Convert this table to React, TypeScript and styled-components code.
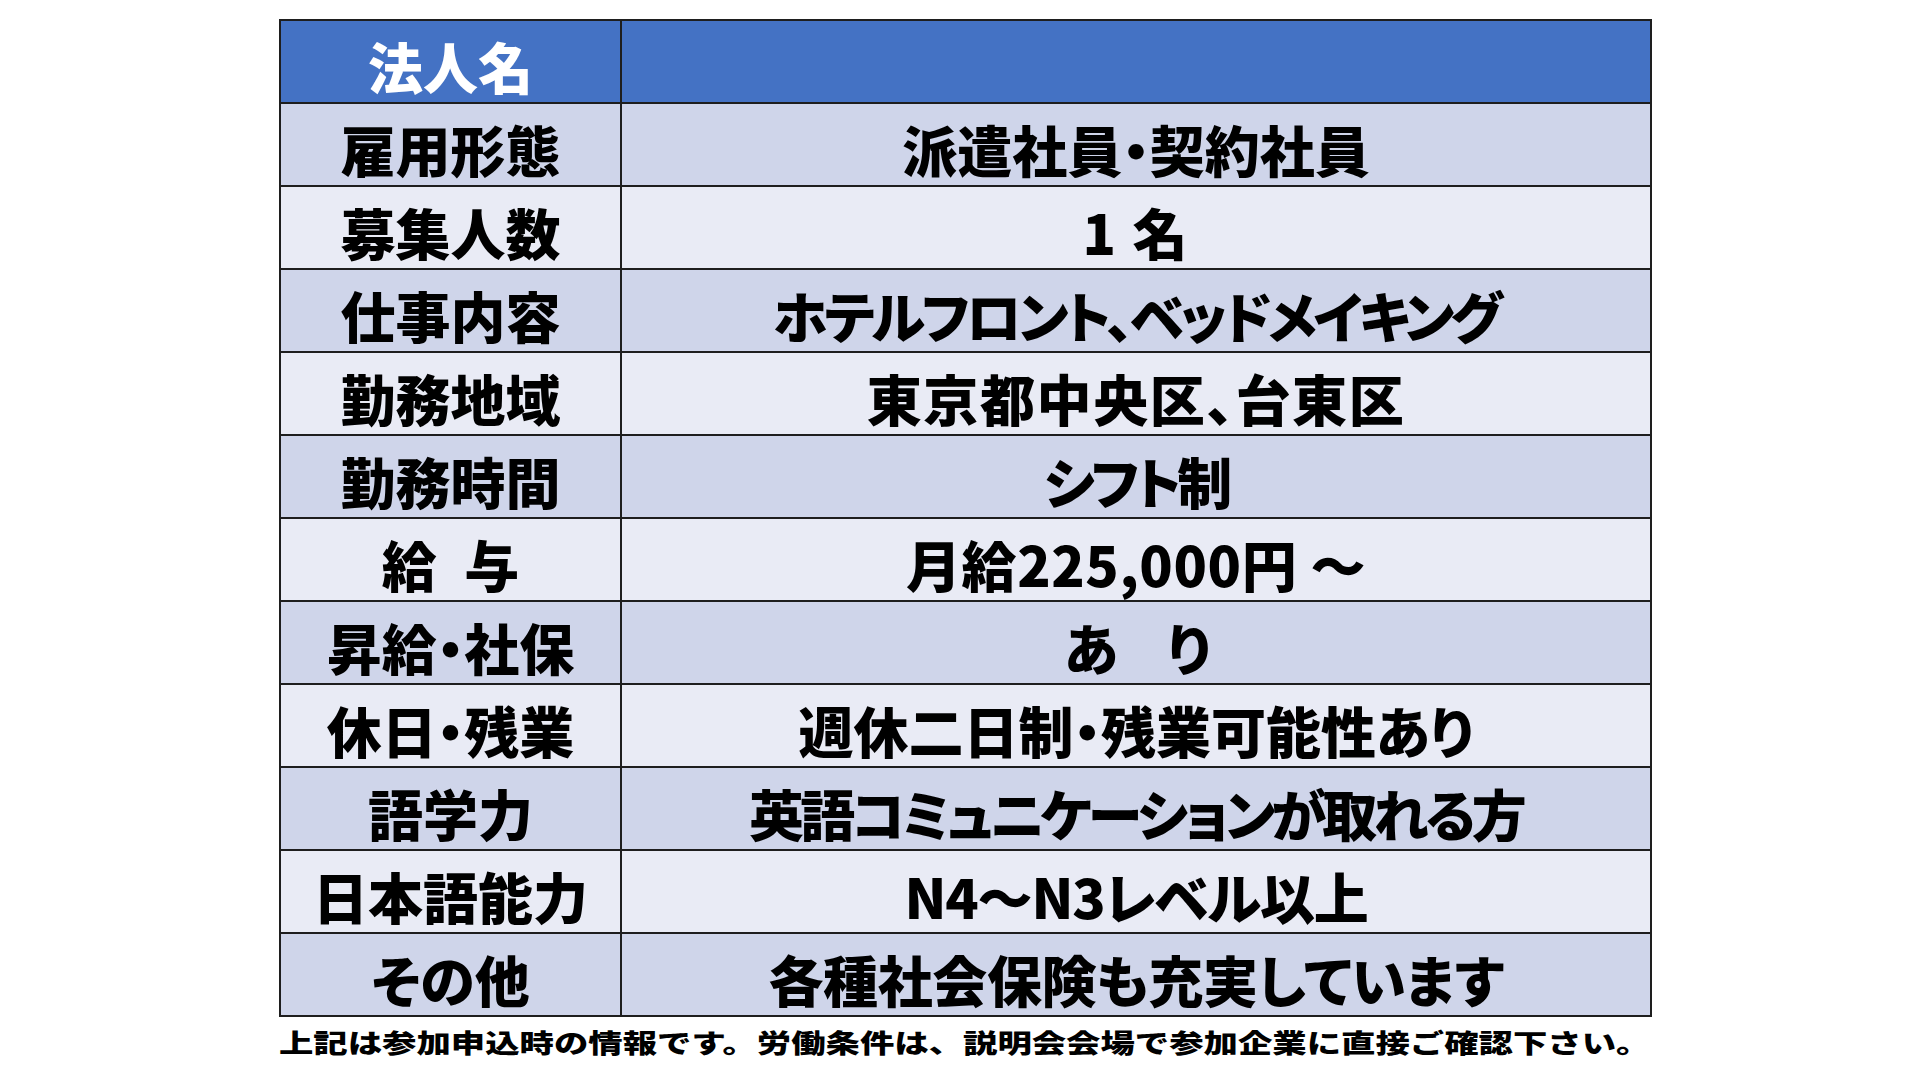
import React from "react";
import styled, { createGlobalStyle } from "styled-components";

const Global = createGlobalStyle`
  html, body { margin: 0; padding: 0; background: #ffffff; }
  body { font-family: "Noto Sans CJK JP", "Noto Sans", sans-serif; }
`;

const Page = styled.div`
  width: 1920px;
  height: 1080px;
  padding: 19px 0 0 279px;
  box-sizing: border-box;
  display: flex;
  flex-direction: column;
  align-items: flex-start;
`;

const Table = styled.div`
  width: 1373px;
  box-sizing: border-box;
  border: 2px solid #1e1e1e;
  display: flex;
  flex-direction: column;
`;

const Row = styled.div<{ $tone: "head" | "dark" | "light" }>`
  display: grid;
  grid-template-columns: 341px 1fr;
  height: 81px;
  background: ${(p) =>
    p.$tone === "head" ? "#4472c4" : p.$tone === "dark" ? "#cfd5ea" : "#e9ebf5"};
  color: ${(p) => (p.$tone === "head" ? "#ffffff" : "#000000")};
  & + & {
    border-top: 2px solid #1e1e1e;
  }
`;

const Cell = styled.div<{ $divider?: boolean; $tracking?: number }>`
  display: flex;
  align-items: center;
  justify-content: center;
  padding-top: 7px;
  box-sizing: border-box;
  font-size: 55px;
  font-weight: 900;
  line-height: 1;
  letter-spacing: ${(p) => p.$tracking ?? 0}px;
  white-space: pre;
  font-feature-settings: "palt" 1;
  border-right: ${(p) => (p.$divider ? "2px solid #1e1e1e" : "none")};
`;

const Note = styled.div`
  margin-top: 12px;
  font-size: 26px;
  font-weight: 900;
  line-height: 1;
  color: #000;
  white-space: nowrap;
  transform: scaleX(1.322);
  transform-origin: left center;
`;

type Item = { label: string; value: string; tracking?: number };

const rows: Item[] = [
  { label: "雇用形態", value: "派遣社員・契約社員" },
  { label: "募集人数", value: "1 名", tracking: 2 },
  { label: "仕事内容", value: "ホテルフロント、ベッドメイキング", tracking: -3.7 },
  { label: "勤務地域", value: "東京都中央区、台東区", tracking: 1.6 },
  { label: "勤務時間", value: "シフト制", tracking: -4 },
  { label: "給\u2002与", value: "月給225,000円 ～", tracking: 0.6 },
  { label: "昇給・社保", value: "あ　り", tracking: -3 },
  { label: "休日・残業", value: "週休二日制・残業可能性あり" },
  { label: "語学力", value: "英語コミュニケーションが取れる方", tracking: -3.8 },
  { label: "日本語能力", value: "N4～N3レベル以上", tracking: -1.2 },
  { label: "その他", value: "各種社会保険も充実しています", tracking: -0.4 },
];

export default function App() {
  return (
    <>
      <Global />
      <Page>
        <Table>
          <Row $tone="head">
            <Cell $divider>法人名</Cell>
            <Cell />
          </Row>
          {rows.map((r, i) => (
            <Row key={r.label} $tone={i % 2 === 0 ? "dark" : "light"}>
              <Cell $divider>{r.label}</Cell>
              <Cell $tracking={r.tracking}>{r.value}</Cell>
            </Row>
          ))}
        </Table>
        <Note>
          上記は参加申込時の情報です。労働条件は、説明会会場で参加企業に直接ご確認下さい。
        </Note>
      </Page>
    </>
  );
}
